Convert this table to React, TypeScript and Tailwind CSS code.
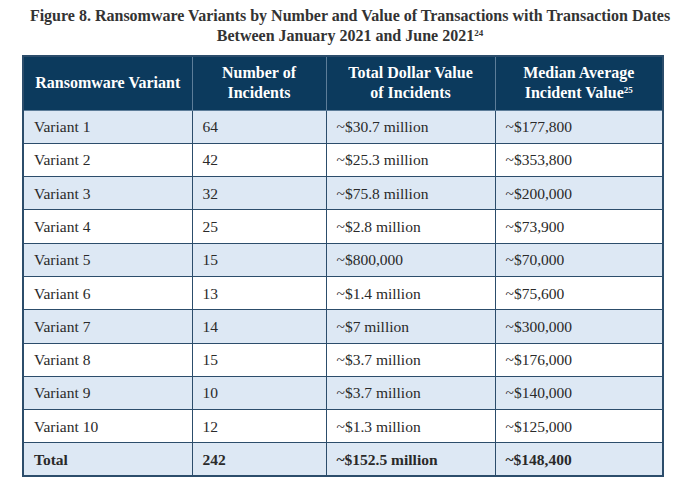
import React from "react";

const rows: [string, string, string, string][] = [
  ["Variant 1", "64", "~$30.7 million", "~$177,800"],
  ["Variant 2", "42", "~$25.3 million", "~$353,800"],
  ["Variant 3", "32", "~$75.8 million", "~$200,000"],
  ["Variant 4", "25", "~$2.8 million", "~$73,900"],
  ["Variant 5", "15", "~$800,000", "~$70,000"],
  ["Variant 6", "13", "~$1.4 million", "~$75,600"],
  ["Variant 7", "14", "~$7 million", "~$300,000"],
  ["Variant 8", "15", "~$3.7 million", "~$176,000"],
  ["Variant 9", "10", "~$3.7 million", "~$140,000"],
  ["Variant 10", "12", "~$1.3 million", "~$125,000"],
];

export default function App() {
  return (
    <div className="w-[700px] h-[484px] bg-white overflow-hidden" style={{ fontFamily: '"Liberation Serif", serif' }}>
      <div className="pt-[6px] text-center text-[#333] font-bold text-[16px] leading-[20px]">
        <div>Figure 8. Ransomware Variants by Number and Value of Transactions with Transaction Dates</div>
        <div>
          Between January 2021 and June 2021
          <span className="text-[9px] leading-none align-[5px]">24</span>
        </div>
      </div>
      <div className="pl-[22px] pt-[9px]">
        <table className="border-collapse w-[640px] table-fixed border-2 border-[#2c4d6b] text-[15.5px] text-[#2a2a2a]">
          <colgroup>
            <col className="w-[169px]" />
            <col className="w-[134px]" />
            <col className="w-[169px]" />
            <col className="w-[168px]" />
          </colgroup>
          <thead>
            <tr className="bg-[#0c3a5d] text-white font-bold h-[54px] leading-[20px] text-[16px]">
              <th className="border border-[#5d7d99] font-bold">Ransomware Variant</th>
              <th className="border border-[#5d7d99] font-bold">
                Number of
                <br />
                Incidents
              </th>
              <th className="border border-[#5d7d99] font-bold">
                Total Dollar Value
                <br />
                of Incidents
              </th>
              <th className="border border-[#5d7d99] font-bold">
                Median Average
                <br />
                Incident Value<span className="text-[9px] leading-none align-[5px]">25</span>
              </th>
            </tr>
          </thead>
          <tbody>
            {rows.map((r, i) => (
              <tr key={i} className={`h-[33.3px] ${i % 2 === 0 ? "bg-[#dde8f4]" : "bg-white"}`}>
                {r.map((c, j) => (
                  <td key={j} className="border border-[#2c4d6b] pl-[10px]">
                    {c}
                  </td>
                ))}
              </tr>
            ))}
            <tr className="h-[33.3px] bg-[#dde8f4] font-bold">
              <td className="border border-[#2c4d6b] pl-[10px]">Total</td>
              <td className="border border-[#2c4d6b] pl-[10px]">242</td>
              <td className="border border-[#2c4d6b] pl-[10px]">~$152.5 million</td>
              <td className="border border-[#2c4d6b] pl-[10px]">~$148,400</td>
            </tr>
          </tbody>
        </table>
      </div>
    </div>
  );
}
